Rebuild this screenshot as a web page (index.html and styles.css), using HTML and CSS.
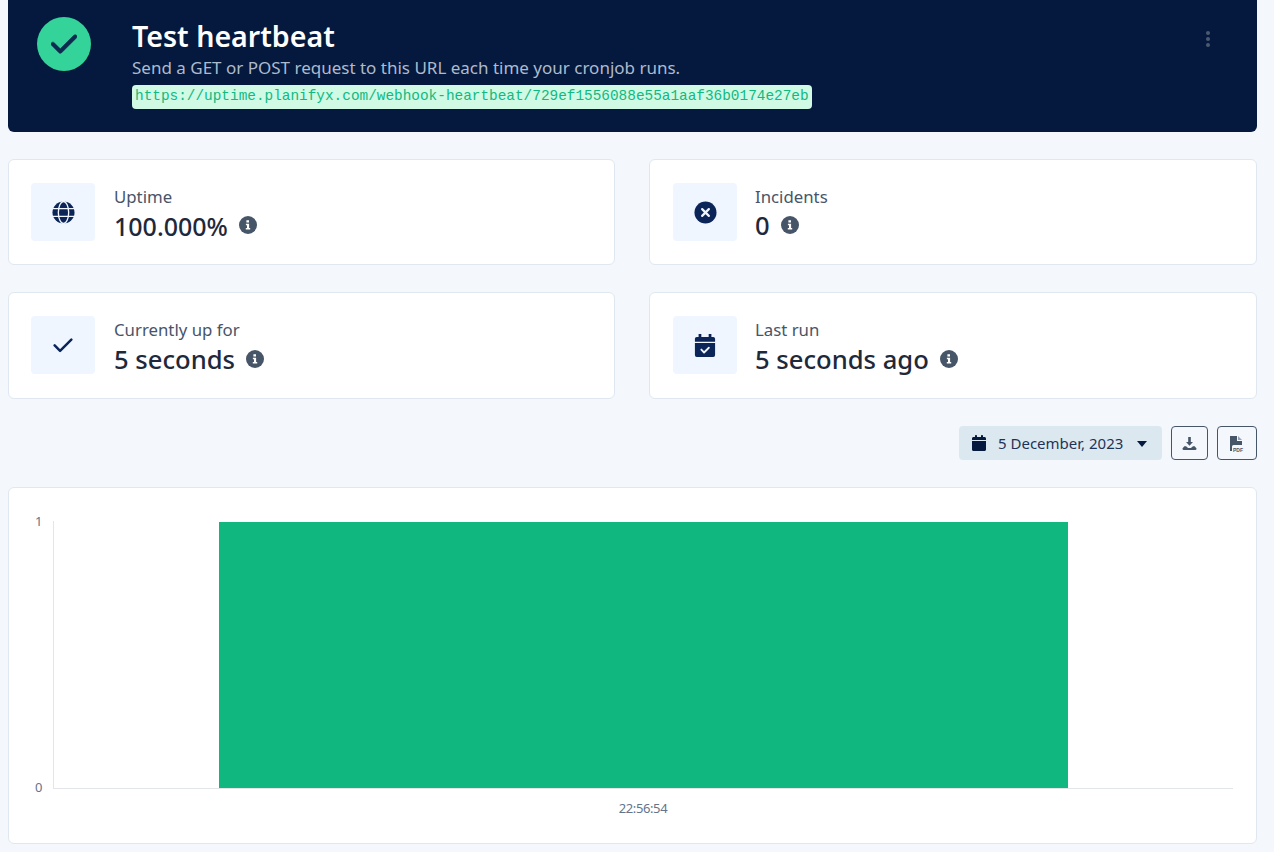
FILE: index.html
```html
<!DOCTYPE html>
<html lang="en">
<head>
<meta charset="utf-8">
<title>Test heartbeat</title>
<link rel="stylesheet" href="styles.css">
</head>
<body>
<main class="page">
  <header class="hero">
    <div class="hero-badge">
      <svg class="hero-check" viewBox="0 0 448 512"><path d="M438.6 105.4c12.5 12.5 12.5 32.8 0 45.3l-256 256c-12.5 12.5-32.8 12.5-45.3 0l-128-128c-12.5-12.5-12.5-32.8 0-45.3s32.8-12.5 45.3 0L160 338.7 393.4 105.4c12.5-12.5 32.8-12.5 45.3 0z"/></svg>
    </div>
    <div class="hero-text">
      <h1 class="hero-title">Test heartbeat</h1>
      <p class="hero-sub">Send a GET or POST request to this URL each time your cronjob runs.</p>
      <code class="hero-url">https://uptime.planifyx.com/webhook-heartbeat/729ef1556088e55a1aaf36b0174e27eb</code>
    </div>
    <div class="hero-menu"><i></i><i></i><i></i></div>
  </header>

  <section class="stats">
    <article class="stat">
      <div class="stat-tile">
        <svg class="ic" viewBox="0 0 24 24"><circle cx="12" cy="12" r="11.5" fill="#0b2559"/><g fill="none" stroke="#eff6ff" stroke-width="1.4"><path d="M0 8h24M0 16h24"/><ellipse cx="12" cy="12" rx="5.4" ry="11.5"/></g></svg>
      </div>
      <div>
        <div class="stat-label">Uptime</div>
        <div class="stat-value stat-value-tight">100.000%<svg class="info" viewBox="0 0 18 18"><circle cx="9" cy="9" r="9"/><path class="info-i" d="M7.4 4.2h2.6v2.2H7.4zM6.9 7.7h3.2v4.2h1.1v1.6H6.8v-1.6h1.2V9.300H6.900z"/></svg></div>
      </div>
    </article>
    <article class="stat">
      <div class="stat-tile">
        <svg class="ic" viewBox="0 0 24 24"><circle cx="12" cy="12" r="11.5" fill="#0b2559"/><path d="M8.500 8.500l7 7M15.500 8.500l-7 7" stroke="#eff6ff" stroke-width="2.300" stroke-linecap="round"/></svg>
      </div>
      <div>
        <div class="stat-label">Incidents</div>
        <div class="stat-value">0<svg class="info" viewBox="0 0 18 18"><circle cx="9" cy="9" r="9"/><path class="info-i" d="M7.4 4.2h2.6v2.2H7.4zM6.9 7.7h3.2v4.2h1.1v1.6H6.8v-1.6h1.2V9.300H6.900z"/></svg></div>
      </div>
    </article>
    <article class="stat stat-tall">
      <div class="stat-tile">
        <svg class="ic ic-check" viewBox="0 0 24 24"><path d="M2 12.500l6.500 6.500L22 5.500" fill="none" stroke="#0b2559" stroke-width="3" stroke-linecap="round" stroke-linejoin="round"/></svg>
      </div>
      <div>
        <div class="stat-label">Currently up for</div>
        <div class="stat-value">5 seconds<svg class="info" viewBox="0 0 18 18"><circle cx="9" cy="9" r="9"/><path class="info-i" d="M7.4 4.2h2.6v2.2H7.4zM6.9 7.7h3.2v4.2h1.1v1.6H6.8v-1.6h1.2V9.300H6.900z"/></svg></div>
      </div>
    </article>
    <article class="stat stat-tall">
      <div class="stat-tile">
        <svg class="ic ic-cal" viewBox="0 0 24 24" preserveAspectRatio="none"><path fill="#0b2559" d="M5 0h3v3h8V0h3v3h2a2 2 0 0 1 2 2v3H1V5a2 2 0 0 1 2-2h2zM1 9.500h22V22a2 2 0 0 1-2 2H3a2 2 0 0 1-2-2z"/><path d="M8 16.300l3 3 5.200-5" fill="none" stroke="#eff6ff" stroke-width="2" stroke-linecap="round" stroke-linejoin="round"/></svg>
      </div>
      <div>
        <div class="stat-label">Last run</div>
        <div class="stat-value">5 seconds ago<svg class="info" viewBox="0 0 18 18"><circle cx="9" cy="9" r="9"/><path class="info-i" d="M7.4 4.2h2.6v2.2H7.4zM6.9 7.700h3.2v4.2h1.1v1.6H6.800v-1.6h1.2V9.300H6.900z"/></svg></div>
      </div>
    </article>
  </section>

  <div class="toolbar">
    <button class="date-btn">
      <svg class="date-ic" viewBox="0 0 448 512"><path d="M96 32c0-17.700 14.300-32 32-32s32 14.300 32 32v32h128V32c0-17.700 14.300-32 32-32s32 14.300 32 32v32h48c26.500 0 48 21.500 48 48v48H0v-48c0-26.500 21.500-48 48-48h48zM0 192h448v272c0 26.500-21.500 48-48 48H48c-26.500 0-48-21.500-48-48z"/></svg>
      <span class="date-text">5 December, 2023</span>
      <span class="caret"></span>
    </button>
    <button class="tool-btn tool-dl">
      <svg class="dl-ic" viewBox="0 0 16 16"><path d="M6.600 1h2.800v5.500h2.300L8 10.500 4.300 6.500h2.300z"/><path d="M2.500 10.800h1.800L6.500 12.800h3L11.700 10.800h1.800L15.500 13.300v.200a1.500 1.500 0 0 1-1.500 1.500H2a1.500 1.500 0 0 1-1.500-1.500v-.200z"/></svg>
    </button>
    <button class="tool-btn tool-pdf">
      <svg class="pdf-ic" viewBox="0 0 16 18"><path d="M1 0h7v5h5v4H4.500a1.500 1.500 0 0 0-1.500 1.500V15H1z"/><path d="M9 0l4 4H9z" fill="#94a3b8"/><text x="4" y="16" class="pdf-text">PDF</text></svg>
    </button>
  </div>

  <section class="chart-card">
    <div class="chart">
      <div class="y-axis"><span>1</span><span>0</span></div>
      <div class="plot"><div class="bar"></div></div>
      <div class="x-axis"><span>22:56:54</span></div>
    </div>
  </section>
</main>
</body>
</html>
```
FILE: styles.css
```css
* { box-sizing: border-box; }
html, body { margin: 0; height: 852px; overflow: hidden; }
body {
  background: #f4f7fb;
  font-family: "Noto Sans", "Open Sans", sans-serif;
  color: #1e293b;
}
.page { padding: 0 17px 0 8px; }

.hero {
  height: 132px;
  background: #04193d;
  border-radius: 0 0 6px 6px;
  display: flex;
  align-items: flex-start;
  padding: 17px 0 0 29px;
}
.hero-badge {
  width: 54px;
  height: 54px;
  flex: none;
  border-radius: 50%;
  background: #34d399;
  display: flex;
  align-items: center;
  justify-content: center;
}
.hero-check { width: 26px; height: 30px; fill: #0f2a50; stroke: #0f2a50; stroke-width: 10; }
.hero-text { margin-left: 41px; flex: 1; }
.hero-title {
  margin: 0;
  font-size: 28.6px;
  line-height: 38px;
  font-weight: 600;
  color: #fff;
}
.hero-sub {
  margin: 0;
  font-size: 17px;
  line-height: 26px;
  color: #aebbcd;
}
.hero-url {
  display: block;
  width: 680px;
  margin-top: 4px;
  padding: 0 0 0 3px;
  height: 24px;
  line-height: 23px;
  border-radius: 4px;
  background: #d1fae5;
  color: #10b981;
  font-family: "Liberation Mono", monospace;
  font-size: 14.4px;
}
.hero-menu {
  width: 4px;
  margin: 14px 47px 0 0;
  display: flex;
  flex-direction: column;
  gap: 2px;
}
.hero-menu i {
  width: 4px;
  height: 4px;
  border-radius: 50%;
  background: #4b5a70;
}

.stats {
  display: grid;
  grid-template-columns: 607px 608px;
  column-gap: 34px;
  row-gap: 27px;
  margin-top: 27px;
}
.stat {
  height: 106px;
  background: #fff;
  border: 1px solid #dfe8f0;
  border-radius: 6px;
  padding: 23px 0 0 22px;
  display: flex;
  gap: 19px;
}
.stat:nth-child(even) { padding-left: 23px; gap: 18px; }
.stat-tall { height: 107px; }
.stat-tile {
  width: 64px;
  height: 58px;
  flex: none;
  background: #eff6ff;
  border-radius: 4px;
  display: flex;
  align-items: center;
  justify-content: center;
}
.ic { width: 23px; height: 23px; }
.ic-check { width: 20px; height: 20px; }
.ic-cal { width: 22px; height: 23px; }
.stat-label {
  font-size: 16.8px;
  line-height: 24px;
  color: #475569;
  margin-top: 2px;
}
.stat-value {
  font-size: 25.6px;
  line-height: 34px;
  font-weight: 500;
  color: #1e293b;
  display: flex;
  align-items: flex-start;
}
.stat-value-tight { font-size: 25px; }
.stat-tall .stat-value { margin-top: 1px; }
.info {
  width: 18px;
  height: 18px;
  margin: 7px 0 0 11px;
  fill: #475569;
}
.info .info-i { fill: #fff; }

.toolbar {
  display: flex;
  justify-content: flex-end;
  gap: 9px;
  margin-top: 27px;
  height: 34px;
}
.date-btn {
  width: 203px;
  height: 34px;
  border: 0;
  border-radius: 4px;
  background: #dce8f0;
  padding: 0 0 0 13px;
  display: flex;
  align-items: center;
  font: inherit;
  font-size: 15px;
  color: #1e3358;
}
.date-ic { width: 14px; height: 16px; fill: #04193d; flex: none; }
.date-text { margin-left: 12px; }
.caret {
  margin: 2px 0 0 14px;
  width: 0;
  height: 0;
  border-left: 5px solid transparent;
  border-right: 5px solid transparent;
  border-top: 6px solid #04193d;
}
.tool-btn {
  height: 34px;
  padding: 0;
  background: transparent;
  border: 1px solid #475569;
  border-radius: 4px;
  display: flex;
  align-items: center;
  justify-content: center;
}
.tool-dl { width: 37px; }
.tool-pdf { width: 40px; }
.dl-ic { width: 15px; height: 15px; fill: #475569; }
.pdf-ic { width: 16px; height: 18px; margin-top: 3px; fill: #475569; }
.pdf-text {
  font-family: "Liberation Sans", sans-serif;
  font-size: 5px;
  font-weight: 700;
}

.chart-card {
  margin-top: 27px;
  height: 357px;
  background: #fff;
  border: 1px solid #dfe8f0;
  border-radius: 6px;
  padding: 33px 23px 0 26px;
}
.chart {
  display: grid;
  grid-template-columns: 18px 1fr;
  grid-template-rows: 268px auto;
}
.y-axis {
  display: flex;
  flex-direction: column;
  justify-content: space-between;
  font-size: 13px;
  line-height: 16px;
  color: #64748b;
  margin: -8px 0 -6px;
}
.plot {
  border-left: 1px solid #e2e5e9;
  border-bottom: 1px solid #e2e5e9;
  padding: 1px 165px 0 165px;
}
.bar { height: 100%; background: #10b87f; }
.x-axis {
  grid-column: 2;
  text-align: center;
  font-size: 13px;
  line-height: 16px;
  color: #64748b;
  margin-top: 11px;
  letter-spacing: -0.4px;
}
```
